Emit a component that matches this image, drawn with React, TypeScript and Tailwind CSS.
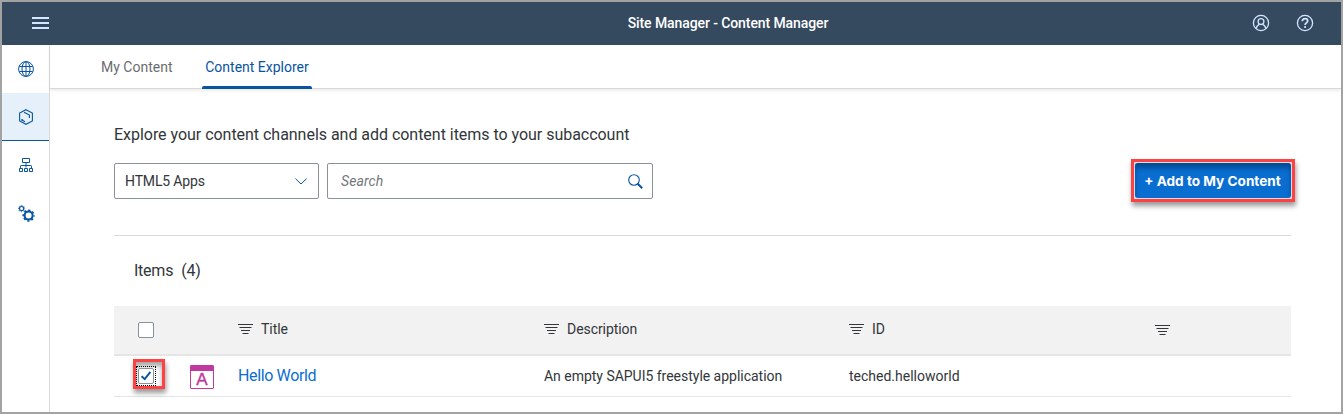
import type { ReactNode } from "react";

function MenuIcon() {
  return (
    <svg width="17" height="12" viewBox="0 0 17 12" fill="#d1e8ff">
      <rect width="17" height="2" />
      <rect y="5" width="17" height="2" />
      <rect y="10" width="17" height="2" />
    </svg>
  );
}

function UserIcon() {
  return (
    <svg width="18" height="18" viewBox="0 0 18 18" fill="none" stroke="#d1e8ff" strokeWidth="1.3">
      <circle cx="9" cy="9" r="7.6" />
      <circle cx="9" cy="7.6" r="2.9" />
      <path d="M4.2 14.6c.4-2.3 1.6-3.7 3.3-4.3M13.8 14.6c-.4-2.3-1.6-3.7-3.3-4.3" />
    </svg>
  );
}

function HelpIcon() {
  return (
    <svg width="18" height="18" viewBox="0 0 18 18" fill="none" stroke="#d1e8ff" strokeWidth="1.3">
      <circle cx="9" cy="9" r="7.6" />
      <path d="M6.3 7.2c0-1.6 1.1-2.5 2.7-2.5s2.7.9 2.7 2.3c0 1.9-2.6 1.9-2.6 4" strokeWidth="1.7" />
      <rect x="8.2" y="12.1" width="1.8" height="1.8" fill="#d1e8ff" stroke="none" />
    </svg>
  );
}

function GlobeIcon() {
  return (
    <svg width="16" height="16" viewBox="0 0 16 16" fill="none" stroke="#0854a0">
      <circle cx="8" cy="8" r="7.4" />
      <ellipse cx="8" cy="8" rx="4" ry="7.4" />
      <path d="M8 .5v15M1.4 5.5h13.2M1.4 10.5h13.2" />
    </svg>
  );
}

function ContentIcon() {
  return (
    <svg width="16" height="16" viewBox="0 0 16 16" fill="none" stroke="#0854a0" strokeWidth="1.1">
      <path d="M8 .7 14.4 4v8L8 15.3 1.6 12V4z" />
      <path d="M6 3.2 11.4 6v3M3.4 10.8l3.6 2" />
      <path d="M3.3 10.9h1.8" strokeWidth="1.3" />
    </svg>
  );
}

function OrgChartIcon() {
  return (
    <svg width="16" height="16" viewBox="0 0 16 16" fill="none" stroke="#0854a0">
      <path d="M4.5 1.5h7v4h-7zM8 5.5v5M2.5 11V9.2q0-.7.7-.7h9.6q.7 0 .7.7V11" />
      <path d="M1.5 11.5h3v3h-3zM6.5 11.5h3v3h-3zM11.5 11.5h3v3h-3z" />
    </svg>
  );
}

function GearsIcon() {
  return (
    <svg width="17" height="17" viewBox="0 0 17 17" fill="none" stroke="#0854a0">
      <circle cx="3.6" cy="3.6" r="2.1" strokeWidth="1.2" />
      <circle cx="3.6" cy="3.6" r="3.1" strokeWidth="1" strokeDasharray="1.2 1.235" strokeDashoffset=".6" />
      <circle cx="10.6" cy="10.6" r="4" strokeWidth="2" />
      <circle cx="10.6" cy="10.6" r="5.4" strokeWidth="1.5" strokeDasharray="2.2 2.041" strokeDashoffset="1.1" />
    </svg>
  );
}

function FilterIcon() {
  return (
    <svg width="15" height="10" viewBox="0 0 15 10" fill="#32363a">
      <rect width="15" height="1" />
      <rect x="1.5" y="3" width="12" height="1" />
      <rect x="3" y="6" width="9" height="1" />
      <rect x="4.5" y="9" width="6" height="1" />
    </svg>
  );
}

function SearchIcon() {
  return (
    <svg width="15" height="15" viewBox="0 0 15 15" fill="none" stroke="#0854a0">
      <circle cx="6" cy="6" r="5.3" strokeWidth="1.1" />
      <path d="m9.5 9.5 4.7 4.7" strokeWidth="2" />
    </svg>
  );
}

function AppIcon() {
  return (
    <div className="flex h-6 w-6 flex-col rounded-[1px] border border-[#c0399f] bg-white">
      <div className="h-[5px] shrink-0 bg-[#c0399f]" />
      <div className="flex grow items-center justify-center font-['Liberation_Sans'] text-[17px] leading-4 text-[#c0399f] [-webkit-text-stroke:0.4px_#c0399f]">A</div>
    </div>
  );
}

function NavItem({ active, children }: { active?: boolean; children: ReactNode }) {
  return (
    <div className={active ? "flex h-12 items-center justify-center border-b border-[#0854a0] bg-[#e5f0fa] pt-px pl-px" : "flex h-12 items-center justify-center pl-px"}>
      {children}
    </div>
  );
}

function ColumnHeader({ label }: { label?: string }) {
  return (
    <div className={label ? "flex items-center gap-2 pb-[3px]" : "flex items-center pb-px"}>
      <FilterIcon />
      {label && <span className="tracking-[-0.06px]">{label}</span>}
    </div>
  );
}

const columns = "grid grid-cols-[124px_306px_305px_306px_136px]";

export default function App() {
  return (
    <div className="flex h-[414px] w-[1343px] flex-col overflow-hidden border-2 border-[#a3a3a3] bg-white font-[Roboto,sans-serif] text-sm whitespace-nowrap text-[#32363a]">
      <header className="grid h-[43px] shrink-0 grid-cols-[1fr_auto_1fr] items-center bg-[#354a5f] pr-[27px] pl-[30px]">
        <div className="pb-px"><MenuIcon /></div>
        <h1 className="pb-px pl-[110px] text-sm font-medium tracking-[-0.09px] text-white">Site Manager - Content Manager</h1>
        <div className="flex justify-end gap-[26px] pb-px">
          <UserIcon />
          <HelpIcon />
        </div>
      </header>

      <div className="flex grow">
        <nav className="w-12 shrink-0 border-r border-[#d9d9d9]">
          <NavItem><GlobeIcon /></NavItem>
          <NavItem active><ContentIcon /></NavItem>
          <NavItem><OrgChartIcon /></NavItem>
          <NavItem><GearsIcon /></NavItem>
        </nav>

        <main className="grow">
          <div className="flex h-11 gap-[29px] border-b border-[#d9d9d9] pl-[51px] shadow-[0_2px_3px_rgba(0,0,0,0.07)]">
            <div className="flex w-[72px] items-center pt-px text-[#6a6d70]">My Content</div>
            <div className="flex h-11 w-[110px] flex-col text-[#0854a0]">
              <div className="flex h-[41px] items-center justify-center pt-[3px]">Content Explorer</div>
              <div className="h-[3px] rounded-t-[2px] bg-[#0854a0]" />
            </div>
          </div>

          <div className="pr-[50px] pl-16">
            <p className="pt-[34px] text-base tracking-[-0.03px]">Explore your content channels and add content items to your subaccount</p>

            <div className="flex h-[89px] items-start border-b border-[#d9d9d9] pt-4">
              <div className="flex h-9 w-[205px] items-center justify-between rounded-[2px] border border-[#89919a] pr-[11px] pl-[10px]">
                <span className="tracking-[-0.15px]">HTML5 Apps</span>
                <svg width="12" height="7" viewBox="0 0 12 7" fill="none" stroke="#0854a0"><path d="m.4.6 5.6 5.4L11.6.6" /></svg>
              </div>
              <div className="ml-2 flex h-9 w-[326px] items-center justify-between rounded-[2px] border border-[#89919a] pr-[9px] pl-[13px]">
                <span className="tracking-[0.1px] text-[#74777a] italic">Search</span>
                <SearchIcon />
              </div>
              <div className="-mt-1 -mr-1 ml-auto h-[43px] w-[164px] border-[3px] border-[#fc4242] bg-[#d8dce0] p-px shadow-[1px_4px_5px_rgba(0,0,0,0.4)]">
                <button className="flex h-[35px] w-[156px] items-center justify-center rounded-[3px] bg-[#0a6ed1] pt-[2px] pr-px font-[Inter] text-[13.6px] font-bold text-white shadow-[inset_0_5px_5px_rgba(0,40,90,0.5)]">+ Add to My Content</button>
              </div>
            </div>

            <div className="flex h-[70px] items-center gap-2 pl-5 text-base tracking-[-0.24px]">
              <span>Items</span>
              <span>(4)</span>
            </div>

            <div className={`${columns} h-[50px] border-b-2 border-[#e5e5e5] bg-[#f2f2f2]`}>
              <div className="flex items-center pl-6">
                <div className="h-4 w-4 rounded-[2px] border border-[#89919a] bg-white" />
              </div>
              <ColumnHeader label="Title" />
              <ColumnHeader label="Description" />
              <ColumnHeader label="ID" />
              <ColumnHeader />
            </div>

            <div className={`${columns} h-[41px] border-b border-[#e5e5e5]`}>
              <div className="flex items-start">
                <div className="mt-[3px] ml-[19px] h-[30px] w-8 border-[3px] border-[#fc4242] shadow-[1px_4px_5px_rgba(0,0,0,0.4),inset_0_4px_5px_rgba(0,0,0,0.35)]">
                  <div className="mt-1 h-5 w-5 border border-dotted border-black p-px">
                    <div className="flex h-4 w-4 items-center justify-center rounded-[2px] border border-[#89919a] bg-white">
                      <svg width="10" height="10" viewBox="0 0 10 10" fill="none" stroke="#0854a0" strokeWidth="2"><path d="m.6 5.1 3.1 3L9.4 1" /></svg>
                    </div>
                  </div>
                </div>
                <div className="mt-[9px] ml-[25px]"><AppIcon /></div>
              </div>
              <div className="flex items-center text-base tracking-[-0.36px] text-[#0a6ed1]">Hello World</div>
              <div className="flex items-center pb-px tracking-[-0.02px]">An empty SAPUI5 freestyle application</div>
              <div className="flex items-center pb-px">teched.helloworld</div>
            </div>
          </div>
        </main>
      </div>
    </div>
  );
}
